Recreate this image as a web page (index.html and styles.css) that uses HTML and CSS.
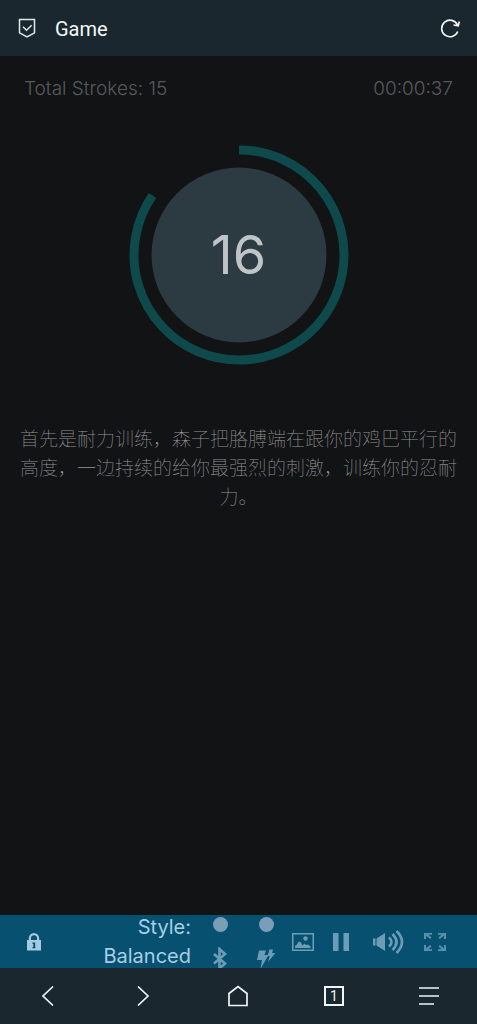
FILE: index.html
```html
<!DOCTYPE html>
<html lang="zh-CN">
<head>
<meta charset="utf-8">
<meta name="viewport" content="width=device-width, initial-scale=1">
<title>Game</title>
<link rel="stylesheet" href="styles.css">
</head>
<body>
<header class="topbar">
  <svg class="shield" viewBox="0 0 18 20" aria-hidden="true"><path d="M1.500 1.500h15v13.300L9 18.800l-7.500-4z M5 8.800l3.500 3.400 5.200-5"/></svg>
  <h1 class="title">Game</h1>
  <button class="plain" aria-label="Reload">
    <svg class="reload" viewBox="0 0 22 22" aria-hidden="true"><path d="M18.700 14.500A8.300 8.300 0 1 1 18.500 8M20.300 4.500l-1 4.300-4.800-.8M18.800 8.500l-1.500-2.500"/></svg>
  </button>
</header>
<main class="game">
  <div class="stats"><span>Total Strokes: 15</span><span>00:00:37</span></div>
  <div class="dial">
    <svg class="ring" viewBox="0 0 220 220" aria-hidden="true">
      <circle class="disc" cx="110" cy="110" r="87.500"/>
      <path class="arc" d="M110 5A105 105 0 1 1 23.500 50.500"/>
    </svg>
    <span class="count">16</span>
  </div>
  <p class="message">首先是耐力训练，森子把胳膊端在跟你的鸡巴平行的高度，一边持续的给你最强烈的刺激，训练你的忍耐力。</p>
</main>
<div class="toolbar">
  <button class="plain lock" aria-label="Lock"><svg class="lock-icon" viewBox="0 0 14 18" aria-hidden="true"><path fill-rule="evenodd" d="M0 7h1.800V5.300a5.200 5.200 0 0 1 10.400 0V7H14v10.500H0zM4 7h6V5.300a3 3 0 0 0-6 0zM5.500 9.500v1.500h.8v3h-.8v1.300h3V14h-.3V9.500z"/></svg></button>
  <span class="style-label">Style: Balanced</span>
  <label class="option"><input class="dot" type="radio" name="device" aria-label="Bluetooth"><svg class="option-icon" viewBox="0 0 18 24" aria-hidden="true"><path class="thick" d="M3 7l11 9.500-5.500 5V2l5.500 5-11 9.500"/></svg></label>
  <label class="option"><input class="dot" type="radio" name="device" aria-label="Shock"><svg class="option-icon" viewBox="0 0 18 24" aria-hidden="true"><path d="M2 3.500h7l-1.500 4.500h4L3.500 22l1.500-9H0zM12.500 2.500h3.500l-1 3.500h3.500l-7.500 9 1.700-6h-2.200z"/></svg></label>
  <button class="plain picture" aria-label="Picture"><svg class="picture-icon" viewBox="0 0 22 18" aria-hidden="true"><path fill-rule="evenodd" d="M0 0h22v18H0zM1.500 1.500v15h19v-15z"/><path d="M3 15v-2l2-1.500 1-2L7.500 8.500l1.500 1 1.500 3 2-2 1.500 1.500 2-.5 2.500 2V15z"/><circle cx="13.500" cy="5.500" r="2.200"/></svg></button>
  <button class="plain wide" aria-label="Pause"><svg class="pause-icon" viewBox="0 0 16 18" aria-hidden="true"><path d="M0 0h5.500v18H0zM10.500 0H16v18h-5.500z"/></svg></button>
  <button class="plain wide" aria-label="Volume"><svg class="volume-icon" viewBox="0 0 32 26" aria-hidden="true"><path d="M1 9.500h2.500v7H1zM4.500 9.500L13 4v18l-8.500-5.500z"/><path class="wave" d="M17 8.500q5 4.500 0 9M20.500 5q8 8 0 16M24.500 2q11 11 0 22"/></svg></button>
  <button class="plain wide" aria-label="Fullscreen"><svg class="full-icon" viewBox="0 0 22 18" aria-hidden="true"><path d="M0 0h8v1.800H4.500L7.500 4.500 6.300 6 2 2.800V6H0zM14 0h8v6h-2V2.800L15.700 6l-1.200-1.500 3-2.700H14zM0 18h8v-1.800H4.500l3-2.700L6.300 12 2 15.200V12H0zM22 18h-8v-1.800h3.500l-3-2.700 1.200-1.500 4.300 3.200V12h2z"/></svg></button>
</div>
<nav class="navbar" aria-label="Browser">
  <button class="plain" aria-label="Back"><svg class="nav-icon" viewBox="0 0 22 22"><path d="M16 1.500L6 11l10 9.500"/></svg></button>
  <button class="plain" aria-label="Forward"><svg class="nav-icon" viewBox="0 0 22 22"><path d="M6 1.500L16 11 6 20.500"/></svg></button>
  <button class="plain" aria-label="Home"><svg class="nav-icon" viewBox="0 0 22 22"><path d="M2 8.500l9-7 9 7v12H2z"/></svg></button>
  <button class="plain" aria-label="Tabs"><span class="tabs">1</span></button>
  <button class="plain" aria-label="Menu"><svg class="nav-icon" viewBox="0 0 22 22"><path d="M1 3h20M1 11h20M1 19h15"/></svg></button>
</nav>
</body>
</html>
```
FILE: styles.css
```css
* { box-sizing: border-box; }
body {
  margin: 0;
  min-height: 100vh;
  display: flex;
  flex-direction: column;
  background: #121315;
  color: #b9c2c7;
  font-family: Inter, "Noto Sans CJK SC", sans-serif;
  font-weight: 300;
}
svg { display: block; }
.plain {
  display: grid;
  place-items: center;
  padding: 0;
  border: 0;
  background: none;
  color: inherit;
  font: inherit;
}
.topbar {
  display: flex;
  align-items: center;
  height: 56px;
  padding: 0 16px 0 18px;
  background: #1b272f;
  color: #f3f8fb;
}
.title {
  flex: 1;
  margin: 2px 0 0 19px;
  font: 400 20px/28px Roboto, sans-serif;
}
.shield { width: 18px; height: 20px; fill: none; stroke: #dfe7ec; stroke-width: 1.5; }
.reload { width: 22px; height: 22px; fill: none; stroke: currentColor; stroke-width: 1.6; }
.game { flex: 1; }
.stats {
  display: flex;
  justify-content: space-between;
  padding: 19px 24px 0;
  color: #58595b;
  font-size: 19px;
  line-height: 28px;
}
.dial { display: grid; place-items: center; margin-top: 42px; }
.dial > * { grid-area: 1 / 1; }
.ring { width: 220px; height: 220px; }
.disc { fill: #2c3a42; }
.arc { fill: none; stroke: #0e4a4c; stroke-width: 9; }
.count { font-size: 54px; line-height: 64px; font-weight: 400; color: #bec4c8; }
.message {
  margin: 58px 16px 0;
  color: #96979a;
  font-family: "Noto Sans CJK SC", sans-serif;
  font-weight: 100;
  font-size: 19px;
  line-height: 29px;
  text-align: center;
}
.toolbar {
  display: flex;
  align-items: stretch;
  height: 53px;
  padding-right: 19px;
  overflow: hidden;
  background: #07506f;
  color: #6c9db7;
}
.toolbar svg { fill: currentColor; }
.lock { width: 68px; color: #a5cbe3; }
.lock-icon { width: 14px; height: 18px; }
.style-label {
  flex: 1;
  align-self: center;
  margin-right: 6px;
  text-align: right;
  color: #a5cfe6;
  font-size: 20px;
  line-height: 29px;
  font-weight: 400;
}
.option {
  width: 46px;
  display: flex;
  flex-direction: column;
  align-items: center;
  gap: 15px;
  padding-top: 2px;
}
.dot {
  appearance: none;
  flex: none;
  width: 15px;
  height: 15px;
  margin: 0;
  border-radius: 50%;
  background: #789fb7;
}
.option-icon { flex: none; width: 18px; height: 24px; }
.toolbar .thick { fill: none; stroke: currentColor; stroke-width: 2.600; }
.picture { width: 28px; }
.picture-icon, .full-icon { width: 22px; height: 18px; }
.full-icon { color: #5590ac; }
.wide { width: 47px; }
.pause-icon { width: 16px; height: 18px; }
.volume-icon { width: 32px; height: 26px; }
.toolbar .wave { fill: none; stroke: currentColor; stroke-width: 2.600; }
.navbar {
  display: grid;
  grid-template-columns: repeat(5, 1fr);
  height: 56px;
  background: #1b272e;
  color: #eff5f8;
}
.nav-icon { width: 22px; height: 22px; fill: none; stroke: currentColor; stroke-width: 1.700; }
.tabs {
  width: 20px;
  height: 20px;
  border: 2px solid currentColor;
  font: 400 14px/16px Roboto, sans-serif;
  text-align: center;
}
```
